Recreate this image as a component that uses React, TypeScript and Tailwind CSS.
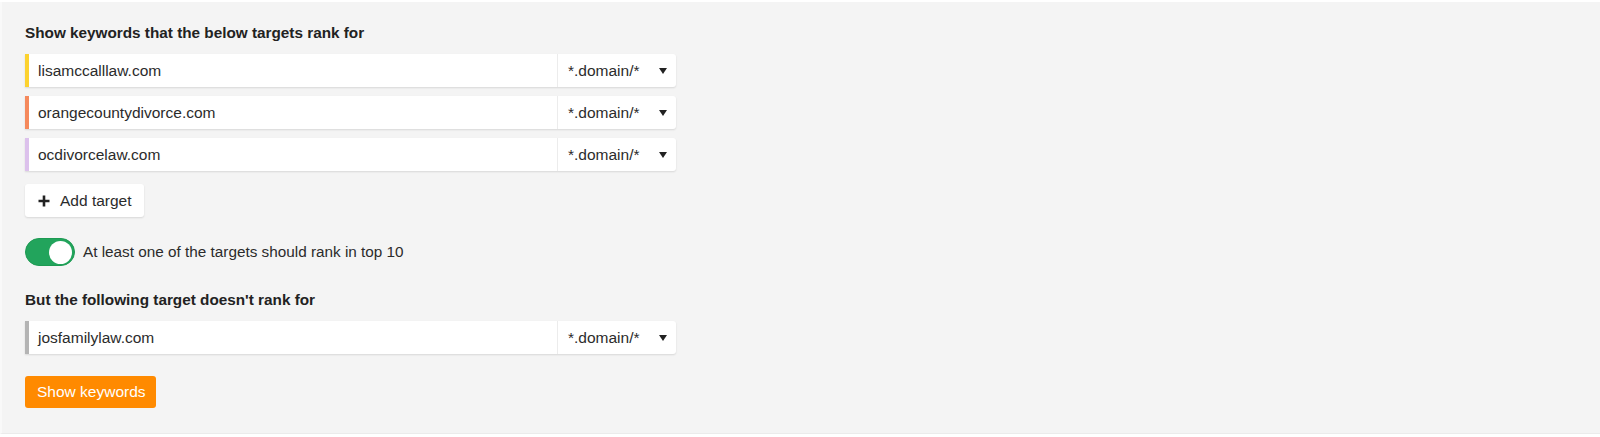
import React from 'react';

interface Target {
  domain: string;
  color: string;
}

const targets: Target[] = [
  { domain: 'lisamccalllaw.com', color: 'bg-[#fcd22f]' },
  { domain: 'orangecountydivorce.com', color: 'bg-[#f5895c]' },
  { domain: 'ocdivorcelaw.com', color: 'bg-[#dcc1ec]' },
];

const TargetRow: React.FC<{ domain: string; color: string }> = ({ domain, color }) => (
  <div className="flex h-[33px] w-[651px] rounded-r-[3px] bg-white shadow-[0_1px_2px_rgba(0,0,0,0.12)]">
    <div className={`w-[4px] shrink-0 ${color}`} />
    <div className="flex flex-1 items-center pl-[9px] text-[15.5px] text-[#2b2b2b]">{domain}</div>
    <div className="flex w-[119px] shrink-0 items-center justify-between border-l border-[#ececec] pl-[10px] pr-[9px] text-[15.5px] text-[#2b2b2b]">
      <span>*.domain/*</span>
      <svg width="8" height="6" viewBox="0 0 8 6">
        <path d="M0 0 L8 0 L4 6 Z" fill="#222" />
      </svg>
    </div>
  </div>
);

export default function App() {
  return (
    <div className="h-[437px] w-full bg-white pt-[2px] font-['Liberation_Sans',Arial,sans-serif]">
      <div className="flex h-[432px] flex-col border-b border-l-2 border-[#ebebeb] border-l-[#f9f9f9] bg-[#f4f4f4] pl-[23px] pt-[21px]">
        <h2 className="text-[15.3px] font-bold leading-[20px] text-[#222]">Show keywords that the below targets rank for</h2>

        <div className="mt-[11px] flex flex-col gap-[9px]">
          {targets.map(t => (
            <TargetRow key={t.domain} domain={t.domain} color={t.color} />
          ))}
        </div>

        <button className="mt-[13px] flex h-[33px] w-[119px] items-center gap-[10px] rounded-[3px] bg-white pl-[13px] text-[15.5px] text-[#2b2b2b] shadow-[0_1px_2px_rgba(0,0,0,0.12)]">
          <svg width="12" height="12" viewBox="0 0 12 12">
            <path d="M6 0.5 V11.5 M0.5 6 H11.5" stroke="#222" strokeWidth="2.6" />
          </svg>
          Add target
        </button>

        <div className="mt-[21px] flex items-center gap-[8px]">
          <div className="flex h-[28px] w-[50px] items-center justify-end rounded-full border border-[#1d9a52] bg-[#22a45c] pr-[2px]">
            <div className="h-[23px] w-[23px] rounded-full bg-white" />
          </div>
          <span className="text-[15.3px] text-[#2b2b2b]">At least one of the targets should rank in top 10</span>
        </div>

        <h2 className="mt-[24px] text-[15.3px] font-bold leading-[20px] text-[#222]">But the following target doesn't rank for</h2>

        <div className="mt-[11px]">
          <TargetRow domain="josfamilylaw.com" color="bg-[#b4b4b4]" />
        </div>

        <button className="mt-[22px] h-[32px] w-[131px] rounded-[3px] bg-[#ff8a00] text-left pl-[12px] text-[15.5px] text-white">
          Show keywords
        </button>
      </div>
    </div>
  );
}
